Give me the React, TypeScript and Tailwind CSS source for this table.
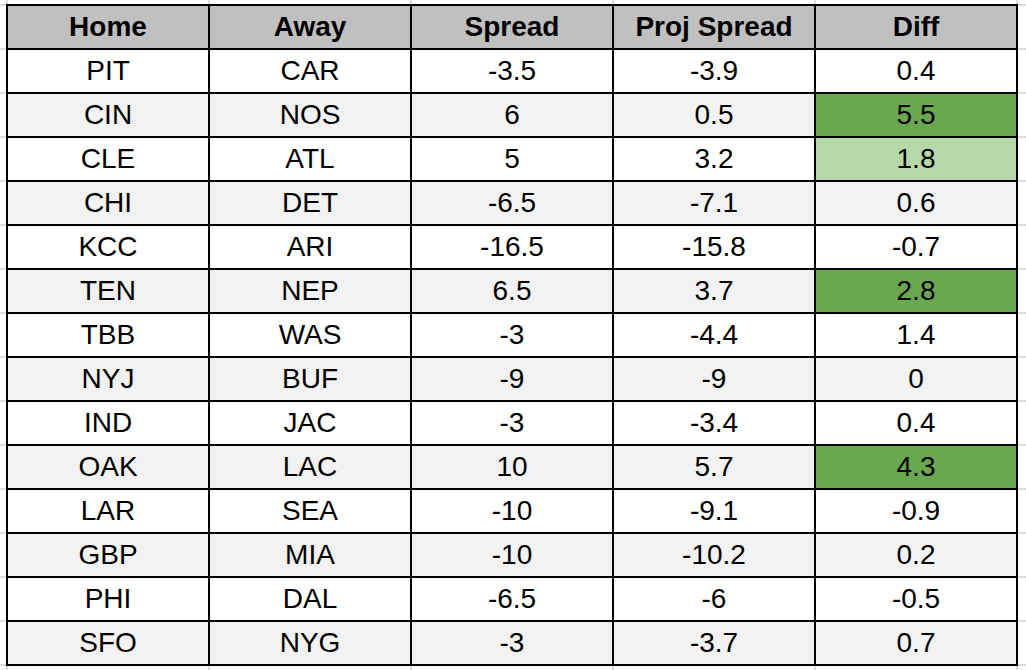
const rows: [string, string, string, string, string, string?][] = [
  ["PIT", "CAR", "-3.5", "-3.9", "0.4"],
  ["CIN", "NOS", "6", "0.5", "5.5", "dark"],
  ["CLE", "ATL", "5", "3.2", "1.8", "light"],
  ["CHI", "DET", "-6.5", "-7.1", "0.6"],
  ["KCC", "ARI", "-16.5", "-15.8", "-0.7"],
  ["TEN", "NEP", "6.5", "3.7", "2.8", "dark"],
  ["TBB", "WAS", "-3", "-4.4", "1.4"],
  ["NYJ", "BUF", "-9", "-9", "0"],
  ["IND", "JAC", "-3", "-3.4", "0.4"],
  ["OAK", "LAC", "10", "5.7", "4.3", "dark"],
  ["LAR", "SEA", "-10", "-9.1", "-0.9"],
  ["GBP", "MIA", "-10", "-10.2", "0.2"],
  ["PHI", "DAL", "-6.5", "-6", "-0.5"],
  ["SFO", "NYG", "-3", "-3.7", "0.7"],
];

const headers = ["Home", "Away", "Spread", "Proj Spread", "Diff"];

export default function App() {
  return (
    <div className="w-[1026px] h-[670px] overflow-hidden bg-white bg-[image:repeating-linear-gradient(to_bottom,transparent_0,transparent_4px,#dcdcdc_4px,#dcdcdc_6px,transparent_6px,transparent_44px),repeating-linear-gradient(to_right,transparent_0,transparent_6px,#dcdcdc_6px,#dcdcdc_8px,transparent_8px,transparent_202px)] pt-[4px] pl-[6px] font-['Liberation_Sans',Arial,sans-serif] text-black">
      <div className="grid grid-cols-[repeat(5,200px)] auto-rows-[42px] gap-[2px] p-[2px] bg-black w-max">
        {headers.map((h) => (
          <div key={h} className="bg-[#c0c0c0] flex items-center justify-center text-[28px] leading-none font-bold">
            {h}
          </div>
        ))}
        {rows.map((r, i) => {
          const base = i % 2 === 0 ? "bg-white" : "bg-[#f2f2f2]";
          return r.slice(0, 5).map((v, j) => {
            let bg = base;
            if (j === 4 && r[5] === "dark") bg = "bg-[#6aa84f]";
            if (j === 4 && r[5] === "light") bg = "bg-[#b6d7a8]";
            return (
              <div key={i + "-" + j} className={`${bg} flex items-center justify-center text-[28px] leading-none`}>
                {v}
              </div>
            );
          });
        })}
      </div>
    </div>
  );
}
